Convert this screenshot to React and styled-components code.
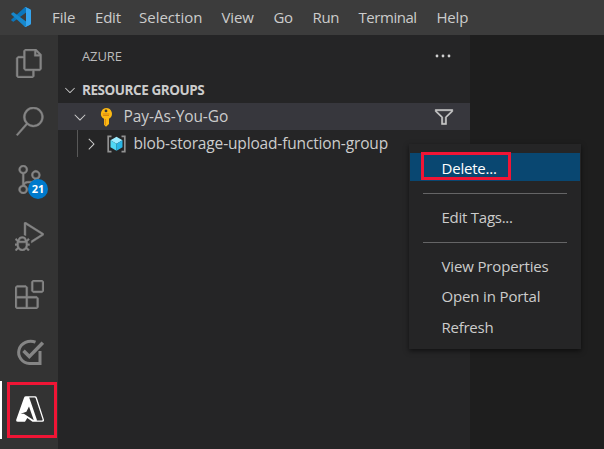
import React from "react";
import styled, { createGlobalStyle } from "styled-components";
import {
  VscFiles,
  VscSearch,
  VscSourceControl,
  VscDebugAlt,
  VscExtensions,
  VscFilter,
  VscChevronDown,
  VscChevronRight,
} from "react-icons/vsc";

const GlobalStyle = createGlobalStyle`
  * { box-sizing: border-box; }
  body { margin: 0; background: #1e1e1e; overflow: hidden; }
`;

const Window = styled.div`
  position: relative;
  width: 604px;
  height: 449px;
  display: flex;
  flex-direction: column;
  overflow: hidden;
  background: #1e1e1e;
  color: #cccccc;
  font-family: "Open Sans", "Noto Sans", sans-serif;
  font-size: 15px;
  white-space: nowrap;
`;

const TitleBar = styled.header`
  flex: 0 0 35px;
  display: flex;
  align-items: center;
  padding-bottom: 2px;
  background: #3c3c3c;
`;

const Logo = styled.svg`
  width: 20px;
  height: 20px;
  margin: 0 21px 0 11px;
  flex: none;
`;

const MenuTitle = styled.span`
  width: ${(p) => p.$width}px;
  letter-spacing: ${(p) => p.$spacing}px;
`;

const Workbench = styled.div`
  flex: 1;
  display: flex;
  min-height: 0;
`;

const ActivityBar = styled.nav`
  flex: 0 0 58px;
  display: flex;
  flex-direction: column;
  background: #333333;
`;

const Activity = styled.div`
  position: relative;
  height: 57.7px;
  flex: none;
  display: flex;
  align-items: center;
  justify-content: center;
  color: #858585;
  ${(p) => p.$active && "color: #fff; box-shadow: inset 2px 0 #fff;"}

  svg { width: 29px; height: 29px; }
  svg[stroke-width="0"] { stroke-width: 0.35px; }
`;

const Badge = styled.span`
  position: absolute;
  left: 28px;
  top: 29px;
  width: 20px;
  height: 20px;
  border-radius: 50%;
  background: #007acc;
  color: #fff;
  font-size: 11px;
  font-weight: 700;
  line-height: 20px;
  text-align: center;
`;

const Marker = styled.div`
  position: absolute;
  left: ${(p) => p.$left}px;
  top: ${(p) => p.$top}px;
  width: ${(p) => p.$width}px;
  height: ${(p) => p.$height}px;
  border: 3px solid #f01535;
`;

const SideBar = styled.aside`
  flex: 0 0 412px;
  background: #252526;
`;

const ViewHeader = styled.div`
  height: 42px;
  display: flex;
  align-items: center;
  justify-content: space-between;
  padding: 0 19px 0 24px;
  color: #bbbbbb;
  font-size: 13px;
  letter-spacing: -0.1px;

  svg { width: 16px; height: 4px; fill: #d0d0d0; }
`;

const SectionHeader = styled.div`
  height: 26px;
  display: flex;
  align-items: center;
  padding-left: 4px;
  font-size: 13.5px;
  font-weight: 700;
  letter-spacing: -0.45px;

  svg { width: 16px; height: 16px; margin-right: 4px; }
`;

const TreeRow = styled.div`
  height: 27px;
  display: flex;
  align-items: center;
  padding: 0 16px 0 ${(p) => p.$indent}px;
  background: ${(p) => (p.$selected ? "#37373d" : "transparent")};

  svg { flex: none; }
`;

const IndentGuide = styled.i`
  width: 1px;
  height: 27px;
  background: #585858;
  margin-right: 4px;
`;

const RowIcon = styled.span`
  display: flex;
  margin-left: ${(p) => p.$gap}px;
`;

const RowLabel = styled.span`
  flex: 1;
  margin: 0 0 2px ${(p) => p.$gap}px;
  font-size: 15.5px;
  letter-spacing: ${(p) => p.$spacing}px;
`;

const ContextMenu = styled.div`
  position: absolute;
  left: 409px;
  top: 144px;
  width: 172px;
  height: 205px;
  padding: 9px 1px;
  background: #252526;
  box-shadow: 0 2px 5px rgba(0, 0, 0, 0.55);
`;

const MenuItem = styled.div`
  height: ${(p) => p.$height}px;
  padding: ${(p) => p.$top}px 0 0 31.5px;
  line-height: 20px;
  letter-spacing: ${(p) => p.$spacing}px;
  background: ${(p) => (p.$selected ? "#094771" : "transparent")};
  color: ${(p) => (p.$selected ? "#fff" : "#cccccc")};
`;

const Separator = styled.div`
  height: 1px;
  margin: ${(p) => p.$top}px 13px 0;
  background: #656566;
`;

const menus = [
  ["File", 43, -0.1],
  ["Edit", 44, -0.2],
  ["Selection", 82.5, 0],
  ["View", 52, -0.1],
  ["Go", 39, -0.3],
  ["Run", 46, -0.3],
  ["Terminal", 78, -0.45],
  ["Help", 40, -0.2],
];

const CodeLogo = () => (
  <Logo viewBox="0 0 100 100">
    <path fill="#0a76bd" d="M96 12 75 1q-4-2-7 2L2 62q-3 3 0 6l7 5q2 2 5 0L91 16z" />
    <path fill="#1687cc" d="M96 88 75 99q-4 2-7-2L2 38q-3-3 0-6l7-5q2-2 5 0l77 57z" />
    <path fill="#35a4ee" d="M75 99q-4 2-7-2 7 3 7-3V6q0-6-7-3 3-4 7-2l21 10q4 2 4 6v66q0 4-4 6z" />
  </Logo>
);

const TestIcon = () => (
  <svg viewBox="0 0 29 29" fill="none" stroke="currentColor">
    <path strokeWidth="3" d="M20.5 4.2A12 11.2 0 1 0 14.5 25.6H25V13" />
    <path strokeWidth="3.5" d="m8.5 12.8 5.8 5.8L27.8 4.6" />
  </svg>
);

const AzureIcon = () => (
  <svg viewBox="0 0 29 29">
    <path
      fill="currentColor"
      d="M11 1.3h9q1.4 0 1.9 1.4l7 21.8q.6 2.2-1.6 2.2H17.5L12.3 23 10 26.7H3q-2.4 0-1.7-2.2L9 2.7q.5-1.4 2-1.4z"
    />
    <path fill="#333" d="M14.2 2.6h5.4q.8 0 1.1.9l6.9 21q.3 1-.7 1h-5.1q.1-.6-.1-1.2z" />
    <path fill="#333" d="m14 11.5 4.8 13.8-9.9-6.6H5.6l5.8-2z" />
  </svg>
);

const KeyIcon = () => (
  <svg width="14" height="20" viewBox="0 0 14 20">
    <path fill="#fdb913" fillRule="evenodd" d="M7 1a6 5.8 0 0 1 3 10.8V17l-3 2.7L5 17.8V11.8A6 5.8 0 0 1 7 1zm0 1.5a1.4 1.4 0 1 0 .01 2.8A1.4 1.4 0 0 0 7 2.5z" />
    <path stroke="#d98510" d="M3.7 7h6.7M4 8.5h6M6.3 12v6" />
  </svg>
);

const ResourceIcon = () => (
  <svg width="19" height="18" viewBox="0 0 19 18">
    <path fill="none" stroke="#929292" strokeWidth="1.7" d="M4.5 1.4H1.2v15.2h3.3M14.5 1.4h3.3v15.2h-3.3" />
    <path fill="#9cebff" d="m9.5 1.8 6 3.5-6 3.5-6-3.5z" />
    <path fill="#50d8f4" d="m3.5 5.3 6 3.5v7l-6-3.5z" />
    <path fill="#28b6e6" d="m15.5 5.3-6 3.5v7l6-3.5z" />
  </svg>
);

export default function App() {
  return (
    <Window>
      <GlobalStyle />
      <TitleBar>
        <CodeLogo />
        {menus.map(([name, width, spacing]) => (
          <MenuTitle key={name} $width={width} $spacing={spacing}>{name}</MenuTitle>
        ))}
      </TitleBar>
      <Workbench>
        <ActivityBar>
          <Activity><VscFiles /></Activity>
          <Activity><VscSearch /></Activity>
          <Activity><VscSourceControl /><Badge>21</Badge></Activity>
          <Activity><VscDebugAlt /></Activity>
          <Activity><VscExtensions /></Activity>
          <Activity><TestIcon /></Activity>
          <Activity $active><AzureIcon /></Activity>
        </ActivityBar>
        <SideBar>
          <ViewHeader>
            <span>AZURE</span>
            <svg viewBox="0 0 16 4">
              <circle cx="2" cy="2" r="1.4" />
              <circle cx="8" cy="2" r="1.4" />
              <circle cx="14" cy="2" r="1.4" />
            </svg>
          </ViewHeader>
          <SectionHeader>
            <VscChevronDown />
            RESOURCE GROUPS
          </SectionHeader>
          <TreeRow $indent={13} $selected>
            <VscChevronDown size={18} />
            <RowIcon $gap={10}><KeyIcon /></RowIcon>
            <RowLabel $gap={10.5} $spacing={-0.1}>Pay-As-You-Go</RowLabel>
            <VscFilter size={20} strokeWidth={0.4} />
          </TreeRow>
          <TreeRow $indent={19}>
            <IndentGuide />
            <VscChevronRight size={18} />
            <RowIcon $gap={7}><ResourceIcon /></RowIcon>
            <RowLabel $gap={7.5} $spacing={-0.155}>blob-storage-upload-function-group</RowLabel>
          </TreeRow>
        </SideBar>
      </Workbench>
      <ContextMenu>
        <MenuItem $height={28} $top={5} $spacing={-0.2} $selected>Delete...</MenuItem>
        <Separator $top={12} />
        <MenuItem $height={36} $top={13} $spacing={-0.25}>Edit Tags...</MenuItem>
        <Separator $top={12} />
        <MenuItem $height={43} $top={13} $spacing={-0.15}>View Properties</MenuItem>
        <MenuItem $height={31} $top={0} $spacing={-0.15}>Open in Portal</MenuItem>
        <MenuItem $height={30} $top={0} $spacing={-0.25}>Refresh</MenuItem>
      </ContextMenu>
      <Marker $left={421} $top={152} $width={90} $height={28} />
      <Marker $left={7} $top={382} $width={50} $height={56} />
    </Window>
  );
}
